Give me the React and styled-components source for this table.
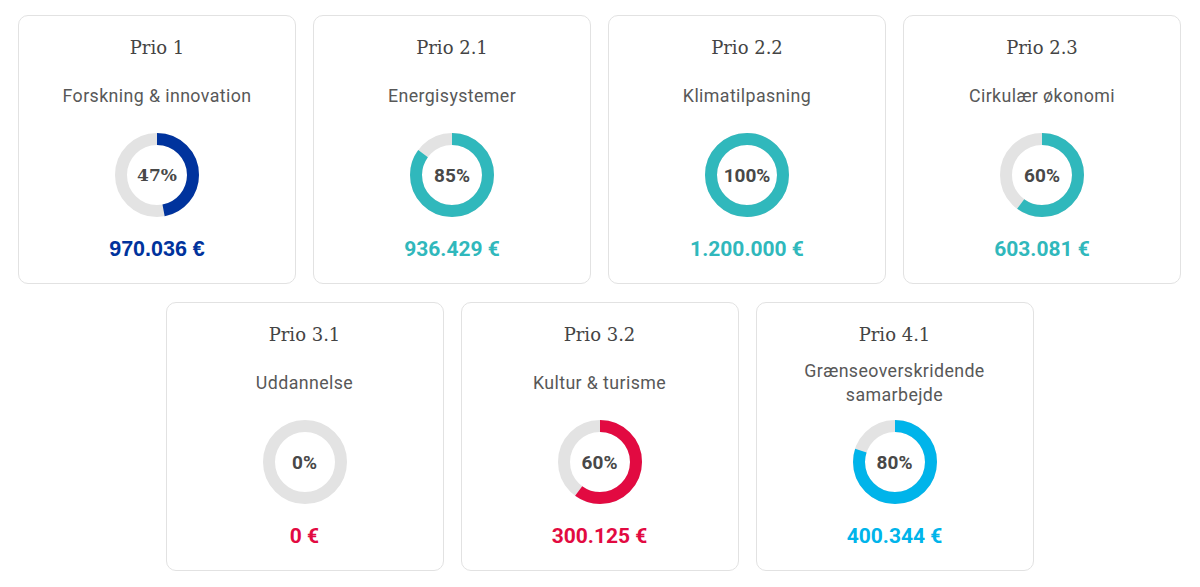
import React from "react";
import styled, { createGlobalStyle } from "styled-components";

const Global = createGlobalStyle`
  body { margin: 0; background: #fff; font-family: Roboto, "Liberation Sans", sans-serif; }
`;

const Grid = styled.div`
  width: 1163px;
  margin: 15px 0 0 18px;
  display: flex;
  flex-wrap: wrap;
  justify-content: center;
  column-gap: 17px;
  row-gap: 18px;
`;

const Card = styled.div`
  box-sizing: border-box;
  width: 278px;
  border: 1px solid #e2e2e2;
  border-radius: 10px;
  padding: 20px 12px 22px;
  display: flex;
  flex-direction: column;
  align-items: center;
`;

const Title = styled.div`
  font-family: "DejaVu Serif", "Liberation Serif", serif;
  font-size: 18px;
  line-height: 24px;
  color: #444;
`;

const Subtitle = styled.div`
  margin-top: 11px;
  height: 50px;
  display: flex;
  align-items: center;
  justify-content: center;
  text-align: center;
  font-family: Roboto, sans-serif;
  font-size: 17.8px;
  line-height: 24px;
  color: #585858;
  letter-spacing: 0.4px;
`;

const SubText = styled.span`
  max-width: 240px;
`;

const DonutWrap = styled.div`
  margin-top: 12px;
  width: 84px;
  height: 84px;
  position: relative;
`;

const Pct = styled.div`
  position: absolute;
  inset: 0;
  display: flex;
  align-items: center;
  justify-content: center;
  font-family: ${(p) => (p.$slab ? '"DejaVu Serif", serif' : "Roboto, sans-serif")};
  font-weight: 700;
  font-size: ${(p) => (p.$slab ? "17px" : "19px")};
  color: #484848;
`;

const Amount = styled.div`
  margin-top: 20px;
  line-height: 24px;
  font-family: ${(p) => (p.$arial ? '"Liberation Sans", Arial, sans-serif' : "Roboto, sans-serif")};
  font-weight: 700;
  font-size: ${(p) => (p.$arial ? "21.5px" : "21px")};
  color: ${(p) => p.$color};
`;

const R = 36;
const C = 2 * Math.PI * R;

function Donut({ pct, color, slab }) {
  return (
    <DonutWrap>
      <svg width="84" height="84" viewBox="0 0 84 84">
        <circle cx="42" cy="42" r={R} fill="none" stroke="#e3e3e3" strokeWidth="12" />
        {pct > 0 && (
          <circle
            cx="42"
            cy="42"
            r={R}
            fill="none"
            stroke={color}
            strokeWidth="12"
            strokeDasharray={`${(C * pct) / 100} ${C}`}
            transform="rotate(-90 42 42)"
          />
        )}
      </svg>
      <Pct $slab={slab}>{pct}%</Pct>
    </DonutWrap>
  );
}

const BLUE = "#00339d";
const TEAL = "#30b8bc";
const RED = "#e20a41";
const CYAN = "#00b4ea";

const items = [
  { t: "Prio 1", s: "Forskning & innovation", p: 47, a: "970.036 €", c: BLUE, first: true },
  { t: "Prio 2.1", s: "Energisystemer", p: 85, a: "936.429 €", c: TEAL },
  { t: "Prio 2.2", s: "Klimatilpasning", p: 100, a: "1.200.000 €", c: TEAL },
  { t: "Prio 2.3", s: "Cirkulær økonomi", p: 60, a: "603.081 €", c: TEAL },
  { t: "Prio 3.1", s: "Uddannelse", p: 0, a: "0 €", c: RED },
  { t: "Prio 3.2", s: "Kultur & turisme", p: 60, a: "300.125 €", c: RED },
  { t: "Prio 4.1", s: "Grænseoverskridende samarbejde", p: 80, a: "400.344 €", c: CYAN },
];

export default function App() {
  return (
    <>
      <Global />
      <Grid>
        {items.map((it) => (
          <Card key={it.t}>
            <Title>{it.t}</Title>
            <Subtitle>
              <SubText>{it.s}</SubText>
            </Subtitle>
            <Donut pct={it.p} color={it.c} slab={it.first} />
            <Amount $color={it.c} $arial={it.first}>
              {it.a}
            </Amount>
          </Card>
        ))}
      </Grid>
    </>
  );
}
